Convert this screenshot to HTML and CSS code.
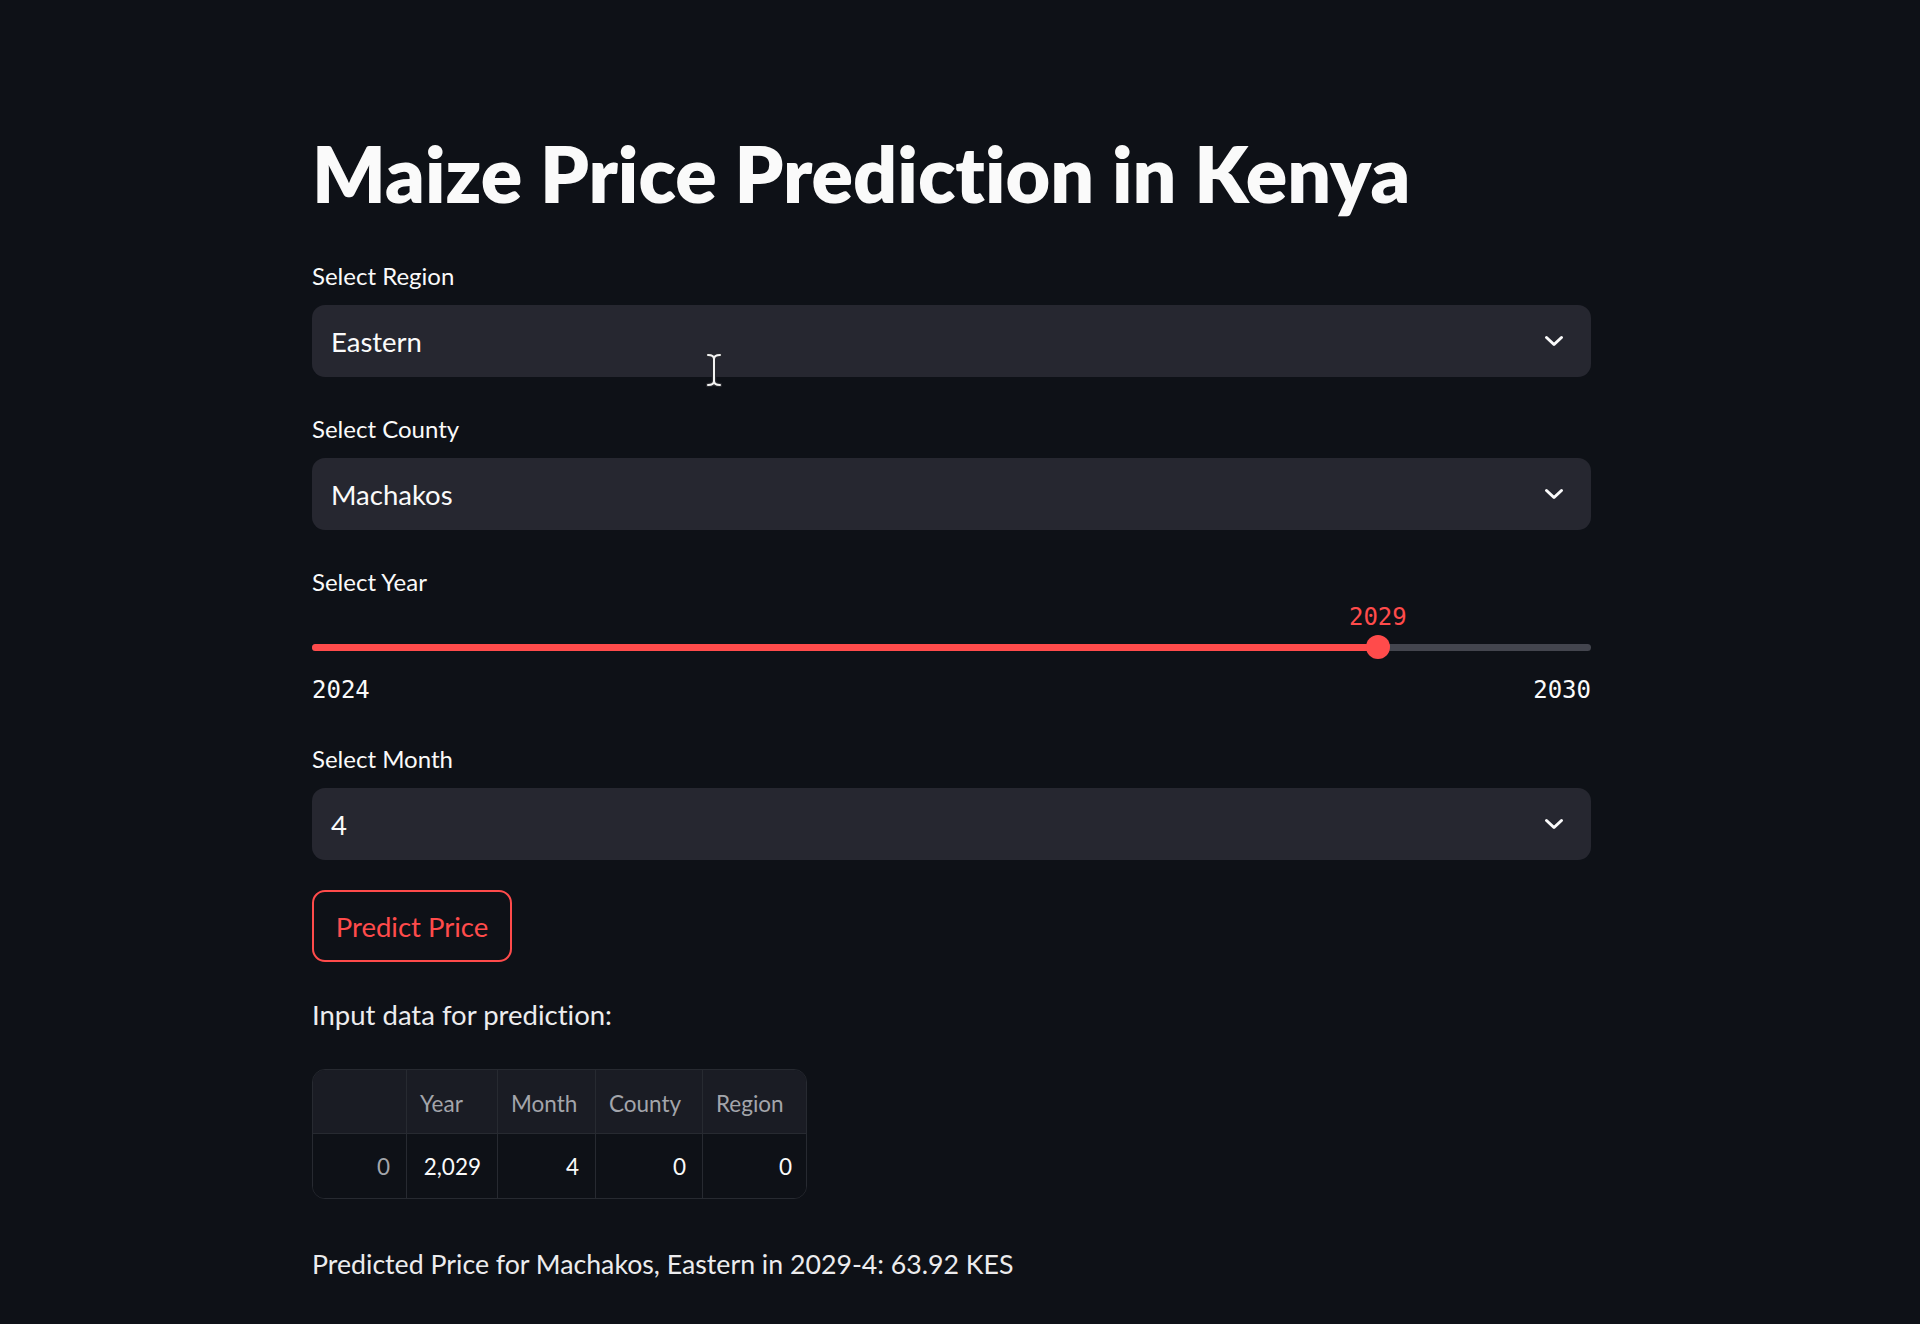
FILE: index.html
```html
<!DOCTYPE html>
<html lang="en">
<head>
<meta charset="utf-8">
<title>Maize Price Prediction in Kenya</title>
<link rel="stylesheet" href="styles.css">
</head>
<body>
<div class="app">
  <main class="block">
    <h1 class="title">Maize Price Prediction in Kenya</h1>

    <div class="field field-first">
      <div class="field-label">Select Region</div>
      <div class="select">
        <span class="select-value">Eastern</span>
        <svg class="chev" viewBox="0 0 20 12" width="20" height="12"><polyline points="2.5,2.5 10,9.5 17.5,2.5"/></svg>
        <svg class="cursor" viewBox="0 0 18 36" width="18" height="36">
          <path class="cursor-outline" d="M3 3 Q9 3 9 7 Q9 3 15 3 M9 7 V29 M3 33 Q9 33 9 29 Q9 33 15 33"/>
          <path class="cursor-fill" d="M3 3 Q9 3 9 7 Q9 3 15 3 M9 7 V29 M3 33 Q9 33 9 29 Q9 33 15 33"/>
        </svg>
      </div>
    </div>

    <div class="field">
      <div class="field-label">Select County</div>
      <div class="select">
        <span class="select-value">Machakos</span>
        <svg class="chev" viewBox="0 0 20 12" width="20" height="12"><polyline points="2.5,2.5 10,9.5 17.5,2.5"/></svg>
      </div>
    </div>

    <div class="field">
      <div class="field-label">Select Year</div>
      <div class="slider">
        <div class="slider-value-row">
          <span class="slider-value" style="left: 83.333%;">2029</span>
        </div>
        <div class="track-wrap">
          <div class="track"><div class="track-fill" style="width: 83.333%;"></div></div>
          <div class="thumb" style="left: 83.333%;"></div>
        </div>
        <div class="ticks"><span>2024</span><span>2030</span></div>
      </div>
    </div>

    <div class="field field-month">
      <div class="field-label">Select Month</div>
      <div class="select">
        <span class="select-value">4</span>
        <svg class="chev" viewBox="0 0 20 12" width="20" height="12"><polyline points="2.5,2.5 10,9.5 17.5,2.5"/></svg>
      </div>
    </div>

    <div class="button-row">
      <button class="btn" type="button">Predict Price</button>
    </div>

    <p class="text text-input">Input data for prediction:</p>

    <div class="table">
      <div class="cell head idx"></div>
      <div class="cell head">Year</div>
      <div class="cell head">Month</div>
      <div class="cell head">County</div>
      <div class="cell head last">Region</div>
      <div class="cell data idx">0</div>
      <div class="cell data">2,029</div>
      <div class="cell data">4</div>
      <div class="cell data">0</div>
      <div class="cell data last">0</div>
    </div>

    <p class="text text-result">Predicted Price for Machakos, Eastern in 2029-4: 63.92 KES</p>
  </main>
</div>
</body>
</html>
```

FILE: styles.css
```css
html, body {
  margin: 0;
  padding: 0;
  background: #0e1117;
}

body {
  font-family: Lato, "Open Sans", sans-serif;
  font-variant-ligatures: none;
  color: #fafafa;
}

.app {
  min-height: 1324px;
  box-sizing: border-box;
  padding: 128px 0 0 312px;
}

.block {
  width: 1279px;
  display: flex;
  flex-direction: column;
}

.title {
  margin: 0;
  font-size: 77px;
  line-height: 90px;
  font-weight: 800;
  color: #fafafa;
}

.field {
  margin-top: 36px;
}

.field-first {
  margin-top: 42px;
}

.field-month {
  margin-top: 39px;
}

.field-label {
  font-size: 24px;
  line-height: 32px;
  height: 32px;
  margin-bottom: 13px;
  color: #fafafa;
}

.select {
  position: relative;
  height: 72px;
  box-sizing: border-box;
  background: #262730;
  border-radius: 13px;
  display: flex;
  align-items: center;
  justify-content: space-between;
  padding: 0 27px 0 19px;
}

.select-value {
  font-size: 27.5px;
  color: #fafafa;
}

.chev {
  display: block;
}

.chev polyline {
  fill: none;
  stroke: #fafafa;
  stroke-width: 3;
  stroke-linecap: round;
  stroke-linejoin: round;
}

.cursor {
  position: absolute;
  left: 393px;
  top: 47px;
}

.cursor path {
  fill: none;
  stroke-linecap: round;
}

.cursor-outline {
  stroke: #2a2b30;
  stroke-width: 4.5;
}

.cursor-fill {
  stroke: #f4f4f4;
  stroke-width: 2;
}

/* slider */
.field-label + .slider {
  margin-top: -13px;
}

.slider {
  display: flex;
  flex-direction: column;
}

.slider-value-row {
  position: relative;
  height: 28px;
  margin-top: 5px;
}

.slider-value {
  position: absolute;
  top: 0;
  transform: translateX(-50%);
  font-family: "DejaVu Sans Mono", "Liberation Mono", monospace;
  font-size: 24px;
  line-height: 28px;
  color: #ff4b4b;
}

.track-wrap {
  position: relative;
  height: 24px;
  margin-top: 4px;
  display: flex;
  align-items: center;
}

.track {
  width: 100%;
  height: 7px;
  border-radius: 4px;
  background: #43454e;
  overflow: hidden;
}

.track-fill {
  height: 100%;
  background: #ff4b4b;
}

.thumb {
  position: absolute;
  top: 0;
  width: 24px;
  height: 24px;
  margin-left: -12px;
  border-radius: 50%;
  background: #ff4b4b;
}

.ticks {
  display: flex;
  justify-content: space-between;
  margin-top: 17px;
  font-family: "DejaVu Sans Mono", "Liberation Mono", monospace;
  font-size: 24px;
  line-height: 28px;
  color: #fafafa;
}

/* button */
.button-row {
  margin-top: 30px;
  display: flex;
}

.btn {
  height: 72px;
  width: 200px;
  box-sizing: border-box;
  border: 2px solid #ff4b4b;
  border-radius: 13px;
  background: transparent;
  color: #ff4b4b;
  font-family: Lato, "Open Sans", sans-serif;
  font-variant-ligatures: none;
  font-size: 27.5px;
  padding: 0;
  display: flex;
  align-items: center;
  justify-content: center;
}

/* text */
.text {
  margin: 0;
  font-size: 27.5px;
  line-height: 36px;
  color: #ececee;
}

.text-input {
  margin-top: 35px;
}

.text-result {
  margin-top: 47px;
  font-size: 26.7px;
}

/* table */
.table {
  margin-top: 36px;
  align-self: flex-start;
  display: grid;
  grid-template-columns: 94px 91px 98px 107px 105px;
  grid-template-rows: 64px 64px;
  border: 1px solid #272a31;
  border-radius: 13px;
  overflow: hidden;
  box-sizing: border-box;
  width: 495px;
  font-size: 22.5px;
}

.cell {
  display: flex;
  align-items: center;
  box-sizing: border-box;
  border-right: 1px solid #272a31;
}

.cell.last {
  border-right: none;
}

.head {
  background: #1a1c24;
  color: #a3a5ab;
  padding: 4px 8px 0 13px;
  border-bottom: 1px solid #272a31;
}

.data {
  justify-content: flex-end;
  padding: 0 16px 0 10px;
  color: #fafafa;
  background: #0e1117;
}

.data.idx {
  color: #a3a5ab;
}
```
